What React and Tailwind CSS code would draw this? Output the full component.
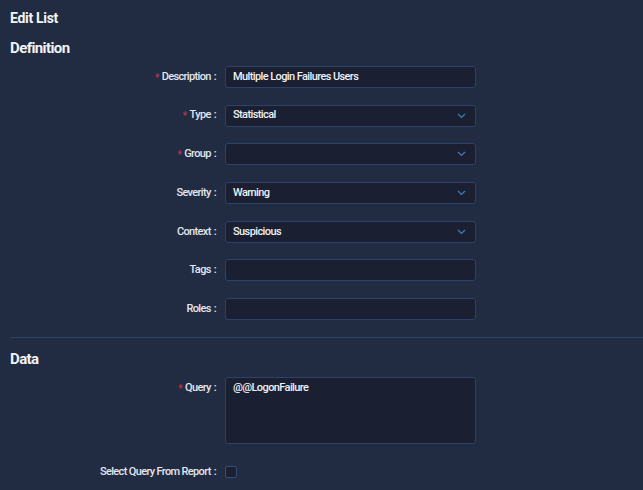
import React from "react";

const Chevron = () => (
  <svg width="9" height="6" viewBox="0 0 9 6" fill="none" className="shrink-0">
    <path d="M1 1l3.5 3.5L8 1" stroke="#3f7fb4" strokeWidth="1.2" />
  </svg>
);

const Label = ({ text, required }) => (
  <div className="flex h-[22px] items-center justify-end pr-[5px] text-[11px] font-medium tracking-[-0.65px] text-[#e3e7ee]">
    {required && <span className="mr-[3px] text-[10px] text-[#c2344a]">*</span>}
    <span>{text}</span>
    <span className="ml-[3px]">:</span>
  </div>
);

const Field = ({ value, select }) => (
  <div className="flex h-[22px] w-[251px] items-center justify-between rounded-[3px] border border-[#2f4168] bg-[#1a2032] pl-[7px] pr-[9px] text-[11px] font-medium tracking-[-0.6px] text-[#eef1f5]">
    <span>{value}</span>
    {select && <Chevron />}
  </div>
);

const rows = [
  { label: "Description", required: true, value: "Multiple Login Failures Users" },
  { label: "Type", required: true, value: "Statistical", select: true },
  { label: "Group", required: true, value: "", select: true },
  { label: "Severity", value: "Warning", select: true },
  { label: "Context", value: "Suspicious", select: true },
  { label: "Tags", value: "" },
  { label: "Roles", value: "" },
];

export default function App() {
  return (
    <div className="h-[490px] w-full overflow-hidden bg-[#212b42] font-['Roboto',sans-serif] text-white">
      <div className="pl-[10px] pt-[9px]">
        <h1 className="text-[14px] font-bold leading-[18px] tracking-[-0.3px] text-[#f1f3f6]">Edit List</h1>
        <h2 className="mt-[12px] text-[15px] font-bold leading-[18px] tracking-[-0.6px] text-[#f1f3f6]">Definition</h2>

        <div className="mt-[9px] grid grid-cols-[211px_251px] gap-x-[4px] gap-y-[16.7px]">
          {rows.map((r) => (
            <React.Fragment key={r.label}>
              <Label text={r.label} required={r.required} />
              <Field value={r.value} select={r.select} />
            </React.Fragment>
          ))}
        </div>

        <div className="mt-[17px] border-t border-[#2f4368]" />

        <h2 className="mt-[12px] text-[15px] font-bold leading-[18px] tracking-[-0.6px] text-[#f1f3f6]">Data</h2>

        <div className="mt-[9px] grid grid-cols-[211px_251px] gap-x-[4px]">
          <Label text="Query" required />
          <div className="row-span-2 h-[67px] rounded-[3px] border border-[#2f4168] bg-[#1a2032] px-[7px] pt-[2px] text-[11px] font-medium tracking-[-0.6px] text-[#eef1f5]">
            @@LogonFailure
          </div>
        </div>

        <div className="mt-[17px] grid grid-cols-[211px_251px] gap-x-[4px]">
          <Label text="Select Query From Report" />
          <div className="flex h-[22px] items-center">
            <div className="h-[12px] w-[12px] rounded-[2px] border border-[#3a4d74] bg-[#1a2032]" />
          </div>
        </div>
      </div>
    </div>
  );
}
